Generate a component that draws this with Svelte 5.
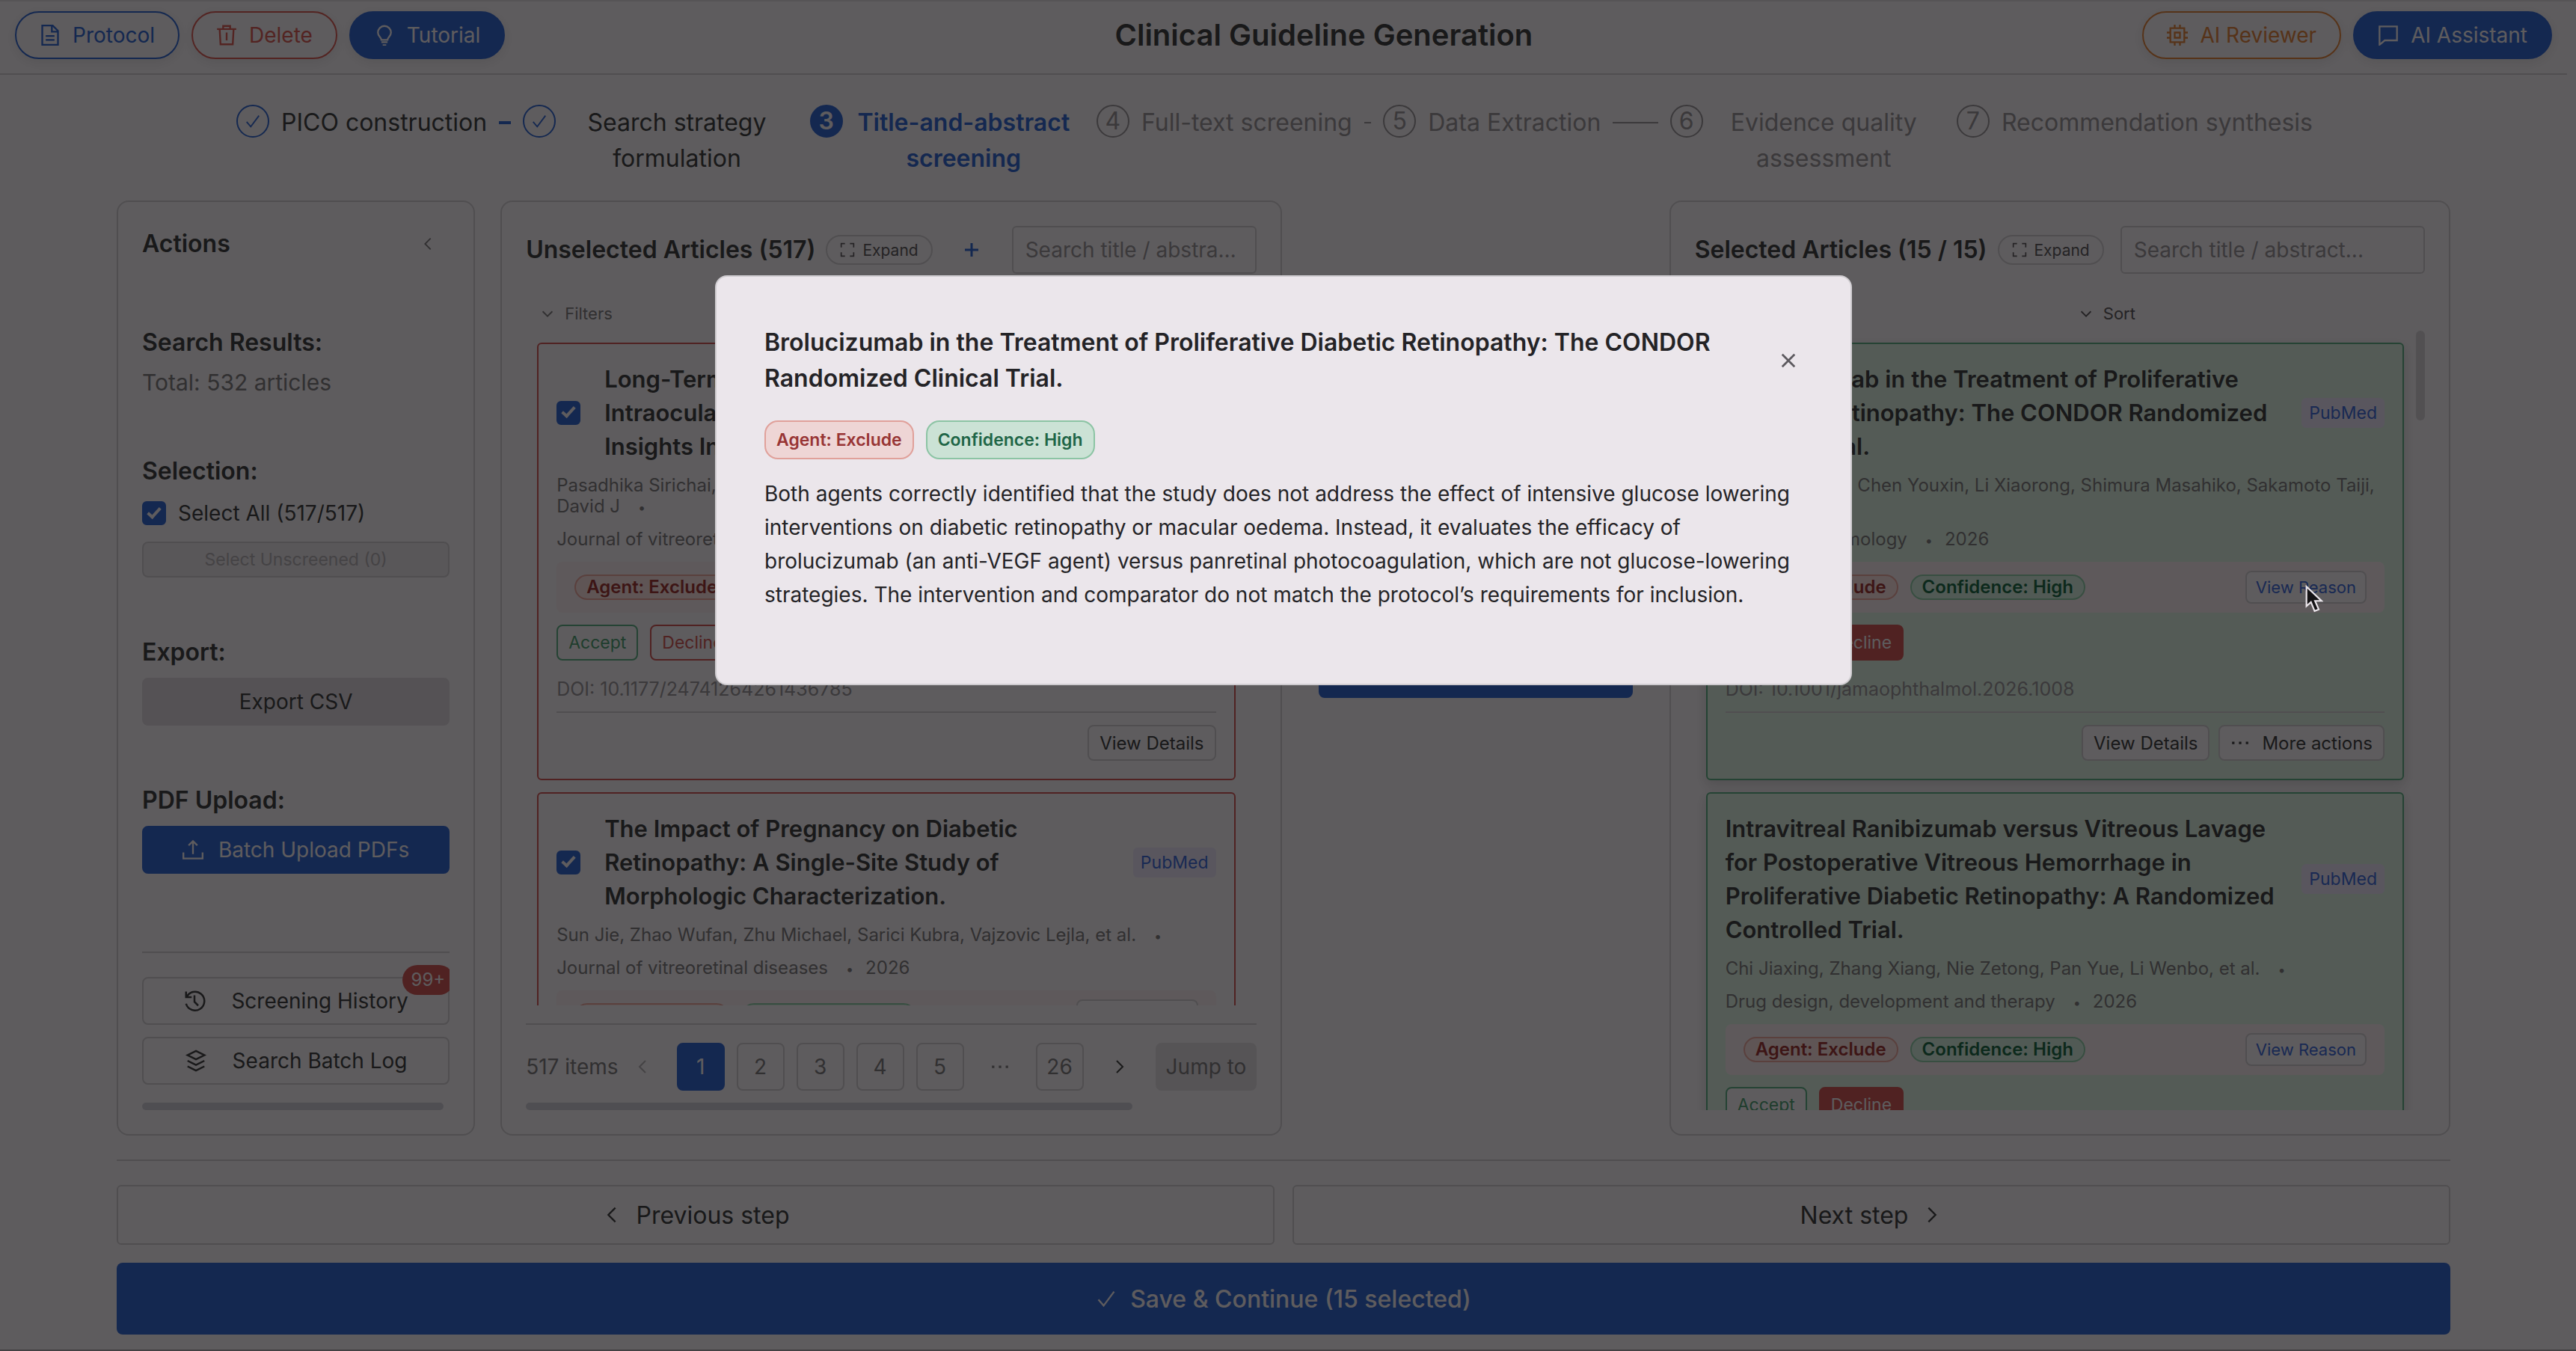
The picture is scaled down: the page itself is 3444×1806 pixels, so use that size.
<script lang="ts">
    interface Step {
        title: string
        state: 'done' | 'active' | 'wait'
        wraps?: boolean
    }

    interface Article {
        title: string
        authors: string
        journal: string
        year: number
        doi: string
    }

    const steps: Step[] = [
        { title: 'PICO construction', state: 'done' },
        { title: 'Search strategy\nformulation', state: 'done', wraps: true },
        { title: 'Title-and-abstract\nscreening', state: 'active', wraps: true },
        { title: 'Full-text screening', state: 'wait' },
        { title: 'Data Extraction', state: 'wait' },
        { title: 'Evidence quality\nassessment', state: 'wait', wraps: true },
        { title: 'Recommendation synthesis', state: 'wait' },
    ]

    const unselected: Article[] = [
        {
            title: 'Long-Term Outcomes of\nIntraocular Implants:\nInsights Into Practice.',
            authors: 'Pasadhika Sirichai, Smith Justine R, Wilson\nDavid J',
            journal: 'Journal of vitreoretinal diseases',
            year: 2026,
            doi: '10.1177/24741264261436785',
        },
        {
            title: 'The Impact of Pregnancy on Diabetic\nRetinopathy: A Single-Site Study of\nMorphologic Characterization.',
            authors: 'Sun Jie, Zhao Wufan, Zhu Michael, Sarici Kubra, Vajzovic Lejla, et al.',
            journal: 'Journal of vitreoretinal diseases',
            year: 2026,
            doi: '10.1177/24741264261421173',
        },
    ]

    const selected: Article[] = [
        {
            title: 'Brolucizumab in the Treatment of Proliferative\nDiabetic Retinopathy: The CONDOR Randomized\nClinical Trial.',
            authors: 'Terasaki Hiroo, Chen Youxin, Li Xiaorong, Shimura Masahiko, Sakamoto Taiji,\net al.',
            journal: 'JAMA ophthalmology',
            year: 2026,
            doi: '10.1001/jamaophthalmol.2026.1008',
        },
        {
            title: 'Intravitreal Ranibizumab versus Vitreous Lavage\nfor Postoperative Vitreous Hemorrhage in\nProliferative Diabetic Retinopathy: A Randomized\nControlled Trial.',
            authors: 'Chi Jiaxing, Zhang Xiang, Nie Zetong, Pan Yue, Li Wenbo, et al.',
            journal: 'Drug design, development and therapy',
            year: 2026,
            doi: '10.2147/DDDT.2026.5521',
        },
    ]

    const reason = [
        'Both agents correctly identified that the study does not address the effect of intensive glucose lowering',
        'interventions on diabetic retinopathy or macular oedema. Instead, it evaluates the efficacy of',
        'brolucizumab (an anti-VEGF agent) versus panretinal photocoagulation, which are not glucose-lowering',
        'strategies. The intervention and comparator do not match the protocol’s requirements for inclusion.',
    ].join('\n')

    const icons: Record<string, string> = {
        file: 'M3 1h12l6 6v16H3zM14 1v7h7M7 13h10M7 17.500h10',
        trash: 'M1 5h22M4 5l1 17.500h14L20 5M8 5V1.500h8V5M12 9v9',
        bulb: 'M8.500 17.500c0-3-4-4-4-8.500a7.500 7.500 0 0 1 15 0c0 4.500-4 5.500-4 8.500zM8.500 20h7M10 23.500h4',
        chip: 'M4 4h16v16H4zM9 9h6v6H9zM9 0v4M15 0v4M9 20v4M15 20v4M0 9h4M0 15h4M20 9h4M20 15h4',
        chat: 'M2 2h20v16H8l-6 5z',
        left: 'M16 4l-8 8 8 8',
        right: 'M8 4l8 8-8 8',
        down: 'M5 9l7 7 7-7',
        check: 'M3 13l6 7L21 4',
        plus: 'M12 3v18M3 12h18',
        expand: 'M2 8V2h6M16 2h6v6M22 16v6h-6M8 22H2v-6',
        upload: 'M12 17V2M7 7l5-5 5 5M1 15v7h22v-7',
        history: 'M3 2v6h6M3.500 8A10 10 0 1 1 3 15M12 6v7l4 4',
        layers: 'M12 1.500l9 4.500-9 4.500L3 6zM3 12l9 4.500 9-4.500M3 18l9 4.500 9-4.500',
        times: 'M3 3l18 18M21 3L3 21',
        more: 'M2 12h3M10.500 12h3M19 12h3',
    }

    let open = $state(true)
    let allChecked = $state(true)
</script>

{#snippet icon(name: string)}
    <svg class="icon {name}" viewBox="0 0 24 24" aria-hidden="true"><path d={icons[name]} /></svg>
{/snippet}

{#snippet panelHeader(title: string)}
    <div class="panel-header">
        <h2>{title}</h2>
        <button class="expand-btn">{@render icon('expand')}Expand</button>
        {#if title.startsWith('Unselected')}
            <button class="add-btn" aria-label="Add article">{@render icon('plus')}</button>
        {/if}
        <input class="search" type="text" aria-label={'Search in ' + title} placeholder="Search title / abstract..." />
    </div>
    <div class="panel-tools">
        <button class="tool">{@render icon('down')}Filters</button>
        <button class="tool strong">{@render icon('down')}Sort</button>
    </div>
{/snippet}

{#snippet card(article: Article, accepted: boolean)}
    <article class="card" class:accepted>
        <div class="card-top">
            {#if !accepted}
                <input type="checkbox" aria-label={article.title} bind:checked={allChecked} />
            {/if}
            <h3>{article.title}</h3>
            <span class="source">PubMed</span>
        </div>
        <p class="meta">{article.authors}<span class="dot">•</span></p>
        <p class="meta">{article.journal}<span class="dot">•</span><span class="year">{article.year}</span></p>
        <div class="verdict">
            <span class="badge exclude">Agent: Exclude</span>
            <span class="badge high">Confidence: High</span>
            <button class="reason-btn" onclick={() => (open = true)}>View Reason</button>
        </div>
        <div class="decision">
            <button class="accept">Accept</button>
            <button class="decline" class:filled={accepted}>Decline</button>
        </div>
        <p class="doi">DOI: {article.doi}</p>
        <div class="card-actions">
            <button>View Details</button>
            {#if accepted}
                <button>{@render icon('more')}More actions</button>
            {/if}
        </div>
    </article>
{/snippet}

<div class="page">
    <header class="topbar">
        <div class="group">
            <button class="pill blue">{@render icon('file')}Protocol</button>
            <button class="pill red">{@render icon('trash')}Delete</button>
            <button class="pill solid">{@render icon('bulb')}Tutorial</button>
        </div>
        <h1>Clinical Guideline Generation</h1>
        <div class="group">
            <button class="pill orange">{@render icon('chip')}AI Reviewer</button>
            <button class="pill solid">{@render icon('chat')}AI Assistant</button>
        </div>
    </header>

    <main>
        <ol class="steps">
            {#each steps as step, i}
                <li class="step {step.state}" class:wraps={step.wraps}>
                    <span class="step-icon">
                        {#if step.state === 'done'}{@render icon('check')}{:else}{i + 1}{/if}
                    </span>
                    <span class="step-title">{step.title}</span>
                    {#if i < steps.length - 1}
                        <span class="tail"></span>
                    {/if}
                </li>
            {/each}
        </ol>

        <div class="columns">
            <aside class="panel actions">
                <div class="actions-header">
                    <h2>Actions</h2>
                    <button class="collapse" aria-label="Collapse">{@render icon('left')}</button>
                </div>
                <section>
                    <h2>Search Results:</h2>
                    <p class="total">Total: 532 articles</p>
                </section>
                <section>
                    <h2>Selection:</h2>
                    <label class="select-all">
                        <input type="checkbox" bind:checked={allChecked} />
                        Select All (517/517)
                    </label>
                    <button class="side-btn small" disabled>Select Unscreened (0)</button>
                </section>
                <section>
                    <h2>Export:</h2>
                    <button class="side-btn grey">Export CSV</button>
                </section>
                <section>
                    <h2>PDF Upload:</h2>
                    <button class="side-btn primary">{@render icon('upload')}Batch Upload PDFs</button>
                </section>
                <div class="logs">
                    <button class="side-btn log">
                        {@render icon('history')}Screening History
                        <span class="count">99+</span>
                    </button>
                    <button class="side-btn log">{@render icon('layers')}Search Batch Log</button>
                </div>
                <div class="h-scroll"></div>
            </aside>

            <section class="panel">
                {@render panelHeader('Unselected Articles (517)')}
                <div class="list-wrap">
                    <div class="list">
                        {#each unselected as article}
                            {@render card(article, false)}
                        {/each}
                    </div>
                    <div class="v-scroll"></div>
                </div>
                <nav class="pager" aria-label="Pagination">
                    <span class="items">517 items</span>
                    <button class="arrow prev" aria-label="Previous page" disabled>{@render icon('left')}</button>
                    {#each [1, 2, 3, 4, 5] as n}
                        <button class="num" class:current={n === 1}>{n}</button>
                    {/each}
                    <span class="gap">{@render icon('more')}</span>
                    <button class="num">26</button>
                    <button class="arrow" aria-label="Next page">{@render icon('right')}</button>
                    <button class="jump">Jump to</button>
                </nav>
                <div class="h-scroll short"></div>
            </section>

            <div class="middle">
                <button class="side-btn primary">Run screen</button>
            </div>

            <section class="panel">
                {@render panelHeader('Selected Articles (15 / 15)')}
                <div class="list-wrap">
                    <div class="list">
                        {#each selected as article}
                            {@render card(article, true)}
                        {/each}
                    </div>
                    <div class="v-scroll thumb"></div>
                </div>
            </section>
        </div>

        <footer>
            <div class="nav-row">
                <button class="nav-btn">{@render icon('left')}Previous step</button>
                <button class="nav-btn">Next step{@render icon('right')}</button>
            </div>
            <button class="save">{@render icon('check')}Save &amp; Continue (15 selected)</button>
        </footer>
    </main>
</div>

{#if open}
    <div class="mask">
        <div class="modal" role="dialog" aria-modal="true" aria-labelledby="reason-title">
            <div class="modal-header">
                <h2 id="reason-title">{'Brolucizumab in the Treatment of Proliferative Diabetic Retinopathy: The CONDOR\nRandomized Clinical Trial.'}</h2>
                <button class="close" aria-label="Close" onclick={() => (open = false)}>{@render icon('times')}</button>
            </div>
            <div class="modal-badges">
                <span class="badge exclude">Agent: Exclude</span>
                <span class="badge high">Confidence: High</span>
            </div>
            <p class="reason">{reason}</p>
        </div>
    </div>
{/if}

<svg class="cursor" viewBox="0 0 22 34" aria-hidden="true">
    <path d="M1.500 2v24l5.500-5 4.500 11 5-2-4.500-10.500h8z" />
</svg>

<style>
    :global(body) {
        background: #ebe6eb;
    }

    .page {
        --bg: #ebe6eb;
        --text: #403f41;
        --muted: #7c787c;
        --faint: #948f94;
        --line: #c8c4c9;
        --blue: #3464c8;
        --red: #c85555;
        --green: #5ea882;

        box-sizing: border-box;
        height: 100vh;
        min-height: 1400px;
        padding-right: 12px;
        display: flex;
        flex-direction: column;
        background: var(--bg);
        color: var(--text);
        border-bottom: 2px solid #a8a2a8;
        box-shadow: inset 0 2px 0 #d6d1d6;
    }

    .page,
    .mask,
    button,
    input {
        font-family: Inter, 'Liberation Sans', sans-serif;
        font-size: 28px;
    }

    h1,
    h2,
    h3,
    p,
    ol {
        margin: 0;
        padding: 0;
    }

    h1 {
        font-size: 40px;
        font-weight: 600;
    }

    h2 {
        font-size: 32px;
        line-height: 48px;
        font-weight: 600;
        white-space: pre;
    }

    button {
        box-sizing: border-box;
        display: flex;
        align-items: center;
        justify-content: center;
        padding: 0;
        border: 2px solid var(--line);
        border-radius: 8px;
        background: transparent;
        color: var(--text);
        white-space: nowrap;
    }

    .icon {
        flex: none;
        width: 28px;
        height: 28px;
        fill: none;
        stroke: currentColor;
        stroke-width: 2;
    }

    /* header */
    .topbar {
        box-sizing: border-box;
        height: 100px;
        padding: 0 20px 5px;
        display: flex;
        align-items: center;
        justify-content: space-between;
        border-bottom: 2px solid var(--line);
    }

    .group {
        display: flex;
        gap: 16px;
    }

    .pill {
        height: 64px;
        padding: 0 31px;
        gap: 16px;
        border-radius: 32px;
        box-shadow: 0 4px 16px rgba(0, 0, 0, 0.08);
    }

    .pill.blue {
        color: var(--blue);
        border-color: var(--blue);
    }

    .pill.red {
        color: #d05a55;
        border-color: #d05a55;
    }

    .pill.orange {
        color: #d8803f;
        border-color: #d8803f;
    }

    .pill.solid {
        background: var(--blue);
        border-color: var(--blue);
        color: var(--bg);
    }

    /* steps */
    main {
        flex: 1;
        min-height: 0;
        padding: 40px 156px 20px;
        display: flex;
        flex-direction: column;
        gap: 32px;
    }

    .steps {
        padding: 0 184px 0 160px;
        display: flex;
        list-style: none;
        font-size: 32px;
        line-height: 48px;
    }

    .step {
        flex: 1 1 0;
        display: flex;
        align-items: flex-start;
        gap: 16px;
        padding-right: 16px;
        color: var(--faint);
        box-sizing: border-box;
    }

    .step:last-child {
        flex: none;
        padding-right: 0;
    }

    .step-icon {
        box-sizing: border-box;
        flex: none;
        width: 44px;
        height: 44px;
        display: flex;
        align-items: center;
        justify-content: center;
        border: 2px solid currentColor;
        border-radius: 50%;
    }

    .step-icon .icon {
        width: 22px;
        height: 22px;
    }

    .step-title {
        white-space: pre;
        text-align: center;
    }

    .tail {
        flex: 1;
        height: 2px;
        margin-top: 23px;
        background: currentColor;
    }

    .wraps .step-title {
        flex: 1 0 auto;
    }

    .wraps .tail {
        flex: none;
        width: 0;
    }

    .done .step-icon {
        color: var(--blue);
    }

    .done .step-title {
        color: var(--text);
    }

    .done .tail {
        height: 4px;
        margin-top: 22px;
        background: var(--blue);
    }

    .active {
        color: var(--blue);
        font-weight: 600;
    }

    .active .step-icon {
        border-color: var(--blue);
        background: var(--blue);
        color: var(--bg);
    }

    /* columns */
    .columns {
        flex: 1;
        min-height: 0;
        display: grid;
        grid-template-columns: 479fr 1044fr 450fr 1044fr;
        grid-template-rows: minmax(0, 1fr);
        gap: 34px;
    }

    .panel {
        box-sizing: border-box;
        min-width: 0;
        padding: 32px;
        display: flex;
        flex-direction: column;
        border: 2px solid var(--line);
        border-radius: 16px;
    }

    .actions-header {
        display: flex;
        align-items: center;
        justify-content: space-between;
        margin-bottom: 84px;
    }

    .collapse {
        padding-right: 18px;
        border: 0;
        color: var(--muted);
    }

    .collapse .icon {
        width: 22px;
        height: 22px;
    }

    .actions section {
        display: flex;
        flex-direction: column;
        gap: 10px;
        margin-bottom: 76px;
    }

    .total {
        font-size: 30px;
        line-height: 38px;
        color: var(--muted);
    }

    .select-all {
        display: flex;
        align-items: center;
        gap: 16px;
        line-height: 44px;
        margin-bottom: 6px;
    }

    input[type='checkbox'] {
        appearance: none;
        flex: none;
        width: 32px;
        height: 32px;
        margin: 0;
        display: flex;
        align-items: center;
        justify-content: center;
        border: 2px solid var(--blue);
        border-radius: 6px;
    }

    input[type='checkbox']:checked {
        background: var(--blue);
    }

    input[type='checkbox']:checked::after {
        content: '';
        width: 6px;
        height: 14px;
        margin-bottom: 5px;
        border: solid var(--bg);
        border-width: 0 4px 4px 0;
        transform: rotate(42deg);
    }

    .side-btn {
        width: 100%;
        height: 64px;
        gap: 20px;
    }

    .side-btn.small {
        height: 48px;
        font-size: 23px;
        background: #ded9de;
        color: #aca7ac;
    }

    .side-btn.grey {
        background: #d4ced4;
        border-color: #d4ced4;
    }

    .side-btn.primary {
        background: var(--blue);
        border-color: var(--blue);
        color: var(--bg);
    }

    .side-btn.log {
        position: relative;
        gap: 34px;
    }

    .log .icon {
        width: 30px;
        height: 30px;
    }

    .logs {
        margin-top: auto;
        padding-top: 32px;
        display: flex;
        flex-direction: column;
        gap: 16px;
        border-top: 2px solid var(--line);
        overflow-x: clip;
    }

    .actions section:nth-of-type(4) {
        margin-bottom: 0;
    }

    .count {
        position: absolute;
        top: -18px;
        right: -8px;
        height: 40px;
        padding: 0 12px;
        border-radius: 20px;
        background: var(--red);
        color: var(--bg);
        font-size: 24px;
        line-height: 40px;
    }

    .h-scroll {
        flex: none;
        width: 98%;
        height: 10px;
        margin-top: 24px;
        border-radius: 5px;
        background: #c6c4ce;
    }

    .h-scroll.short {
        width: 83%;
        margin-top: 16px;
    }

    /* article panels */
    .panel-header {
        display: flex;
        align-items: center;
    }

    .expand-btn {
        height: 40px;
        margin-left: 14px;
        padding: 0 17px;
        gap: 10px;
        border-radius: 20px;
        color: #5c595c;
        font-size: 21px;
    }

    .expand-btn .icon {
        width: 20px;
        height: 20px;
    }

    .add-btn {
        margin-left: 40px;
        margin-right: 20px;
        border: 0;
        color: var(--blue);
    }

    .add-btn .icon {
        width: 24px;
        height: 24px;
        stroke-width: 3;
    }

    .search {
        box-sizing: border-box;
        flex: 1;
        min-width: 0;
        height: 64px;
        margin-left: 22px;
        padding: 0 16px;
        border: 2px solid var(--line);
        border-radius: 6px;
        background: transparent;
        text-overflow: ellipsis;
    }

    .search::placeholder {
        color: var(--faint);
        opacity: 1;
    }

    .panel-tools {
        display: grid;
        grid-template-columns: 1fr 1fr;
        gap: 12px;
        margin-top: 30px;
        height: 46px;
    }

    .tool {
        justify-content: flex-start;
        padding-left: 18px;
        gap: 12px;
        border: 0;
        color: var(--muted);
        font-size: 22px;
    }

    .tool.strong {
        color: #5c595c;
    }

    .tool .icon {
        width: 22px;
        height: 22px;
    }

    .list-wrap {
        flex: 1;
        min-height: 0;
        display: flex;
        gap: 16px;
        overflow: hidden;
    }

    .list {
        flex: 1;
        min-width: 0;
        padding: 16px 0 0 15px;
        display: flex;
        flex-direction: column;
        gap: 16px;
    }

    .v-scroll {
        width: 12px;
        height: 120px;
        border-radius: 6px;
    }

    .v-scroll.thumb {
        background: #cdc8cd;
    }

    .card {
        flex: none;
        padding: 24px;
        border: 2px solid var(--red);
        border-radius: 6px;
    }

    .card.accepted {
        background: #d2e4d7;
        border-color: var(--green);
        box-shadow: 0 6px 16px rgba(0, 0, 0, 0.14);
    }

    .card-top {
        display: flex;
        align-items: center;
    }

    .card-top input {
        margin-right: 32px;
    }

    h3 {
        flex: 1;
        font-size: 31px;
        line-height: 45px;
        font-weight: 600;
        white-space: pre;
    }

    .source {
        padding: 0 10px;
        border-radius: 6px;
        background: #ded8ea;
        color: #4068d0;
        font-size: 23px;
        line-height: 40px;
    }

    .meta,
    .doi {
        margin-top: 16px;
        font-size: 24px;
        line-height: 28px;
        color: var(--muted);
        white-space: pre;
    }

    .dot {
        margin-left: 24px;
        font-size: 18px;
        line-height: 0;
    }

    .year {
        margin-left: 16px;
    }

    .verdict {
        display: flex;
        align-items: center;
        gap: 16px;
        margin-top: 16px;
        padding: 12px 24px;
        border-radius: 8px;
        background: #ebdfe3;
    }

    .badge {
        padding: 0 14px;
        border: 2px solid #e0a09a;
        border-radius: 18px;
        background: #eed5d5;
        color: #983535;
        font-size: 24px;
        line-height: 30px;
        font-weight: 600;
    }

    .badge.high {
        border-color: #8cc4a4;
        background: #cbe2d5;
        color: #1f6647;
    }

    .reason-btn {
        margin-left: auto;
        height: 44px;
        padding: 0 12px;
        background: var(--bg);
        color: #4068d0;
        font-size: 22px;
    }

    .decision {
        display: flex;
        gap: 16px;
        margin-top: 16px;
    }

    .decision button {
        height: 48px;
        padding: 0 14px;
        font-size: 23px;
    }

    .decision .accept {
        background: var(--bg);
        border-color: var(--green);
        color: #4f9a72;
    }

    .decision .decline {
        border-color: var(--red);
        color: var(--red);
    }

    .decision .filled {
        background: var(--red);
        color: var(--bg);
    }

    .doi {
        margin-top: 24px;
        padding-bottom: 16px;
        border-bottom: 2px solid var(--line);
        color: var(--faint);
        font-size: 25px;
    }

    .card-actions {
        display: flex;
        justify-content: flex-end;
        gap: 12px;
        margin-top: 16px;
    }

    .card-actions button {
        height: 48px;
        padding: 0 14px;
        gap: 16px;
        background: var(--bg);
        font-size: 24px;
    }

    .icon.more {
        width: 26px;
        height: 26px;
        stroke-width: 3;
    }

    .pager {
        display: flex;
        align-items: center;
        gap: 16px;
        margin-top: 24px;
        padding-top: 24px;
        border-top: 2px solid var(--line);
        color: var(--muted);
        overflow: hidden;
    }

    .pager button {
        flex: none;
        height: 64px;
        color: var(--muted);
    }

    .items {
        flex: none;
        white-space: nowrap;
    }

    .pager .num,
    .pager .gap,
    .pager .arrow {
        flex: none;
        width: 64px;
    }

    .pager .gap {
        display: flex;
        justify-content: center;
    }

    .pager .current {
        background: var(--blue);
        border-color: var(--blue);
        color: var(--bg);
    }

    .pager .arrow {
        border: 0;
        color: var(--text);
    }

    .pager .prev {
        width: 32px;
        margin: 0 14px 0 0;
        color: #aca7ac;
    }

    .arrow .icon {
        width: 24px;
        height: 24px;
    }

    .pager .jump {
        padding: 0 12px;
        background: #d8d3d8;
        border-color: #d8d3d8;
    }

    .middle {
        padding: 601px 15px 0;
    }

    /* footer */
    footer {
        padding-top: 32px;
        display: flex;
        flex-direction: column;
        gap: 24px;
        border-top: 2px solid var(--line);
    }

    .nav-row {
        display: grid;
        grid-template-columns: 1fr 1fr;
        gap: 24px;
    }

    .nav-btn {
        height: 80px;
        gap: 18px;
        border-radius: 6px;
        font-size: 32px;
    }

    .save {
        height: 96px;
        gap: 18px;
        border: 0;
        background: var(--blue);
        color: var(--bg);
        font-size: 32px;
        font-weight: 500;
    }

    /* reason dialog */
    .mask {
        position: fixed;
        inset: 0;
        box-sizing: border-box;
        display: flex;
        align-items: flex-start;
        justify-content: center;
        padding: 368px 12px 0 0;
        background: rgba(0, 0, 0, 0.6);
    }

    .modal {
        box-sizing: border-box;
        width: 1520px;
        max-width: 90%;
        padding: 64px 64px 96px;
        border: 2px solid #cfccd0;
        border-radius: 16px;
        background: #ebe6eb;
        color: #242326;
    }

    .modal-header {
        display: flex;
        align-items: center;
        justify-content: space-between;
    }

    .close {
        padding: 8px;
        border: 0;
        color: #5c595e;
    }

    .close .icon {
        width: 22px;
        height: 22px;
        stroke-width: 3;
    }

    .modal-badges {
        display: flex;
        gap: 16px;
        margin: 32px 0 24px;
    }

    .modal-badges .badge {
        font-size: 23px;
        line-height: 48px;
    }

    .reason {
        line-height: 45px;
        white-space: pre-line;
    }

    .cursor {
        position: fixed;
        top: 782px;
        left: 3082px;
        width: 24px;
        height: 37px;
        fill: #141214;
        stroke: #ebe6eb;
        stroke-width: 2;
    }
</style>
